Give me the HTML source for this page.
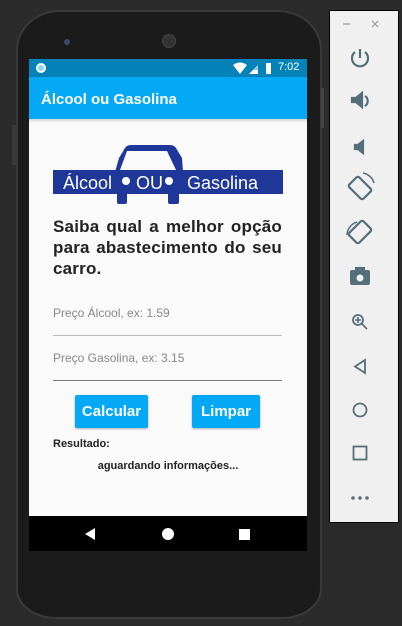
<!DOCTYPE html>
<html><head><meta charset="utf-8"><style>
*{margin:0;padding:0;box-sizing:border-box}
body{width:402px;height:626px;background:#2b2b2b;position:relative;overflow:hidden;font-family:"Liberation Sans",sans-serif}
.a{position:absolute}
</style></head><body>
<div class="a" style="left:16px;top:10px;width:306px;height:609px;background:#1b1b1b;border-radius:44px 44px 40px 40px/40px 40px 30px 30px;border:2px solid #3a3a3a"></div>
<div class="a" style="left:12px;top:125px;width:4px;height:40px;background:#3a3a3a"></div>
<div class="a" style="left:321px;top:88px;width:3px;height:40px;background:#444"></div>
<div class="a" style="left:64px;top:39px;width:6px;height:6px;border-radius:50%;background:#3a4a6a"></div>
<div class="a" style="left:162px;top:34px;width:14px;height:14px;border-radius:50%;background:#333;border:1px solid #444"></div>
<div class="a" style="left:29px;top:59px;width:278px;height:18px;background:#0582b8"></div>
<div class="a" style="left:36px;top:63px;width:10px;height:10px;border-radius:50%;background:#8fd3f4;border:2px solid #fff"></div>
<svg class="a" style="left:232px;top:62px" width="40" height="13"><path d="M1 3 Q8 -2 15 3 L8 12Z" fill="#fff"/><path d="M17 12 L26 3 L26 12Z" fill="#fff"/><path d="M21 8 L26 3 L26 8Z" fill="#9cd"/><rect x="34" y="1" width="5" height="11" fill="#fff"/></svg>
<div class="a" style="left:278px;top:61px;color:#fff;font-size:11px">7:02</div>
<div class="a" style="left:29px;top:77px;width:278px;height:42px;background:#03a9f4;box-shadow:0 2px 3px rgba(0,0,0,.25)"></div>
<div class="a" style="left:41px;top:91px;color:#fff;font-size:15px;font-weight:bold">Álcool ou Gasolina</div>
<div class="a" style="left:29px;top:119px;width:278px;height:397px;background:#fafafa"></div>
<div class="a" style="left:29px;top:119px;width:278px;height:4px;background:linear-gradient(rgba(0,0,0,.15),rgba(0,0,0,0))"></div>
<svg class="a" style="left:53px;top:144px" width="230" height="62">
<path d="M62 28 L66 14 L72 4 Q74 1 78 1 L117 1 Q121 1 123 4 L129 14 L130 28Z" fill="#1e3799"/>
<path d="M67 26 L74 7 L114 7 L123 26Z" fill="#fafafa"/>
<rect x="0" y="26" width="230" height="24" fill="#1e3799"/>
<rect x="64" y="46" width="10" height="14" rx="2" fill="#1e3799"/>
<rect x="115" y="46" width="11" height="14" rx="2" fill="#1e3799"/>
<circle cx="73" cy="37" r="4" fill="#fff"/><circle cx="116" cy="37" r="4" fill="#fff"/>
<text x="10" y="45" fill="#fff" font-size="18" font-family="Liberation Sans">Álcool</text>
<text x="83" y="45" fill="#fff" font-size="18" font-family="Liberation Sans">OU</text>
<text x="134" y="45" fill="#fff" font-size="18" font-family="Liberation Sans">Gasolina</text>
</svg>
<div class="a" style="left:53px;top:216px;width:229px;font-size:17px;font-weight:bold;color:#222;line-height:21px;text-align:justify;text-align-last:left;letter-spacing:.2px">Saiba qual a melhor opção para abastecimento do seu carro.</div>
<div class="a" style="left:53px;top:306px;font-size:12px;color:#888">Preço Álcool, ex: 1.59</div>
<div class="a" style="left:53px;top:335px;width:229px;height:1px;background:#bbb"></div>
<div class="a" style="left:53px;top:351px;font-size:12px;color:#888">Preço Gasolina, ex: 3.15</div>
<div class="a" style="left:53px;top:380px;width:229px;height:1px;background:#777"></div>
<div class="a" style="left:75px;top:395px;width:73px;height:33px;background:#03a9f4;border-radius:2px;box-shadow:0 1px 2px rgba(0,0,0,.3);color:#fff;font-size:15px;font-weight:bold;text-align:center;line-height:33px">Calcular</div>
<div class="a" style="left:192px;top:395px;width:68px;height:33px;background:#03a9f4;border-radius:2px;box-shadow:0 1px 2px rgba(0,0,0,.3);color:#fff;font-size:15px;font-weight:bold;text-align:center;line-height:33px">Limpar</div>
<div class="a" style="left:53px;top:438px;font-size:11px;font-weight:bold;color:#222">Resultado:</div>
<div class="a" style="left:29px;top:460px;width:278px;text-align:center;font-size:11px;font-weight:bold;color:#222">aguardando informações...</div>
<div class="a" style="left:29px;top:516px;width:278px;height:35px;background:#000"></div>
<svg class="a" style="left:29px;top:516px" width="278" height="35"><path d="M66 12 L66 24 L56 18Z" fill="#fff"/><circle cx="139" cy="18" r="6" fill="#fff"/><rect x="210" y="13" width="11" height="11" fill="#fff"/></svg>
<div class="a" style="left:329px;top:10px;width:70px;height:513px;background:#f0f0f0;border:1px solid #000"></div>
<svg class="a" style="left:329px;top:10px" width="70" height="513" fill="none" stroke="#546e7a" stroke-width="2.2">
<path d="M14 14 h7 M43 11 l6 6 M49 11 l-6 6" stroke-width="1.2" stroke="#999"/>
<path d="M31 39 v9" /><path d="M26 42 a8 8 0 1 0 10 0"/>
<path d="M23 88 h4 l6 -5 v14 l-6 -5 h-4z" fill="#546e7a"/><path d="M36 86 a6 6 0 0 1 0 10"/>
<path d="M26 135 h3 l5 -4 v12 l-5 -4 h-3z" fill="#546e7a"/>
<rect x="24" y="168" width="14" height="20" rx="2" transform="rotate(-45 31 178)"/><path d="M34 163 a14 14 0 0 1 11 10" stroke-width="1.5"/>
<rect x="24" y="212" width="14" height="20" rx="2" transform="rotate(45 31 222)"/><path d="M18 225 a14 14 0 0 1 10 -13" stroke-width="1.5"/>
<rect x="21" y="260" width="20" height="15" rx="2" fill="#546e7a" stroke="none"/><rect x="26" y="257" width="10" height="4" fill="#546e7a" stroke="none"/><circle cx="31" cy="268" r="3.5" fill="#f0f0f0" stroke="none"/>
<circle cx="29" cy="310" r="5" stroke-width="1.8"/><path d="M33 314 l5 5 M29 307 v6 M26 310 h6" stroke-width="1.6"/>
<path d="M36 350 v13 l-10 -6.5z" stroke-width="1.8"/>
<circle cx="31" cy="400" r="6.5" stroke-width="1.8"/>
<rect x="24.5" y="436.5" width="13" height="13" stroke-width="1.8"/>
<circle cx="24" cy="488" r="1.8" fill="#546e7a" stroke="none"/><circle cx="31" cy="488" r="1.8" fill="#546e7a" stroke="none"/><circle cx="38" cy="488" r="1.8" fill="#546e7a" stroke="none"/>
</svg>
</body></html>
